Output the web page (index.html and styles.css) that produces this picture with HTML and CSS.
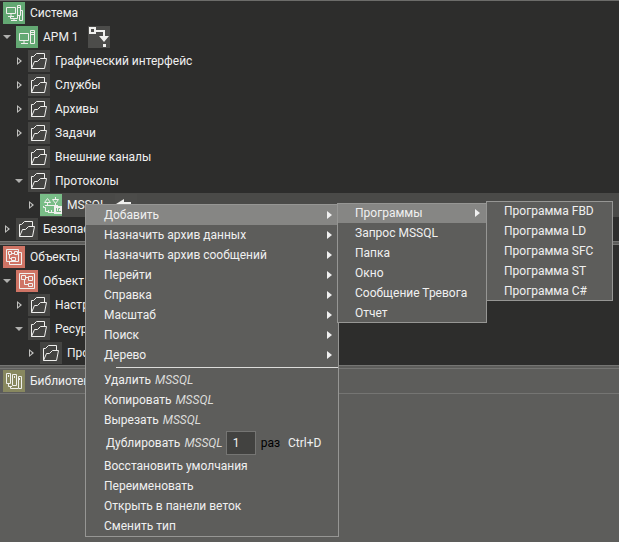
FILE: index.html
```html
<!DOCTYPE html>
<html lang="ru">
<head>
  <meta charset="UTF-8" />
  <meta name="viewport" content="width=device-width, initial-scale=1.0"/>
  <title>Система</title>
  <link rel="stylesheet" href="styles.css">
</head>
<body>
  <svg class="defs" aria-hidden="true">
    <symbol id="folder" viewBox="0 0 22 22">
      <path d="M3.500 18.500V6.500H5.500L8.500 3.500H16.500V8.500M3.500 18.500L6.500 11.500H9.500L12.500 8.500H18.500L16.500 18.500Z"/>
    </symbol>
    <symbol id="system" viewBox="0 0 22 22">
      <path d="M3.500 5.500H12.500V11.500H3.500ZM8 12V14M5 14.500H11M14.500 3.500H17.500V13.500H14.500ZM15 5.500H17M7.500 15V16.500H14.500V13M11 17V18M8 18.500H14M16.500 14V18.500H19.500V8.500H18"/>
    </symbol>
    <symbol id="station" viewBox="0 0 22 22">
      <path d="M3.500 7.500H12.500V14.500H3.500ZM8 15V17M5 17.500H12M14.500 4.500H18.500V17.500H14.500ZM15 6.500H18M15 8.500H18"/>
    </symbol>
    <symbol id="objects" viewBox="0 0 22 22">
      <path d="M3.500 3.500H15.500V15.500H3.500ZM5.500 5.500H8.500V8.500H5.500ZM11.500 5.500H14.500V8.500H11.500ZM9 7.500H11M8.500 11.500H12.500V14.500H8.500ZM6.500 9V12.500H8M16 6.500H18.500V18.500H6.500V16"/>
    </symbol>
    <symbol id="object" viewBox="0 0 22 22">
      <path d="M3.500 3.500H18.500V18.500H3.500ZM5.500 5.500H9.500V9.500H5.500ZM12.500 6.500H16.500V10.500H12.500ZM10 7.500H12M12.500 13.500H16.500V16.500H12.500ZM8.500 10V14.500H12"/>
    </symbol>
    <symbol id="library" viewBox="0 0 22 22">
      <path d="M3.500 3.500H7.500V13.500H3.500ZM5.500 5V7M9.500 4.500H13.500V15.500H9.500ZM11.500 6V8M15.500 6.500H18.500V18.500H15.500ZM16.500 8V10M5.500 14V16.500H9M7.500 17V18.500H15"/>
    </symbol>
    <symbol id="mssql" viewBox="0 0 22 22">
      <path d="M4.500 8.500L7.500 4.500L10.500 8.500ZM12.500 5.500H18.500L15.500 9.500ZM15.500 3V5M7.500 9V11M15.500 9V11M5 11.500H18M3.500 12V13.500H5.500V17.500H8.500M8.500 16V19M11.500 16V19M9 18.500H14"/>
      <path class="solid" d="M14 12H22V20H14Z"/>
      <path class="cut" d="M16.500 14V17.500H18.500M20 14.500H18.500V18M19 17.500H21"/>
    </symbol>
  </svg>

  <main class="panels">
    <section class="panel">
      <div class="row root">
        <svg class="icon green"><use href="#system"/></svg>
        <span>Система</span>
      </div>
      <div class="row">
        <button class="toggle open" aria-label="Свернуть"></button>
        <svg class="icon green"><use href="#station"/></svg>
        <span>АРМ 1</span>
        <svg class="icon link" viewBox="0 0 22 22">
          <path d="M2 2H7V7H2Z" class="frame"/>
          <path class="thick" d="M8 5H16V10"/>
          <path class="solid" d="M11 10H21L16 16ZM15 18H18V21H15Z"/>
        </svg>
      </div>
      <div class="row level-2">
        <button class="toggle" aria-label="Развернуть"></button>
        <svg class="icon"><use href="#folder"/></svg>
        <span>Графический интерфейс</span>
      </div>
      <div class="row level-2">
        <button class="toggle" aria-label="Развернуть"></button>
        <svg class="icon"><use href="#folder"/></svg>
        <span>Службы</span>
      </div>
      <div class="row level-2">
        <button class="toggle" aria-label="Развернуть"></button>
        <svg class="icon"><use href="#folder"/></svg>
        <span>Архивы</span>
      </div>
      <div class="row level-2">
        <button class="toggle" aria-label="Развернуть"></button>
        <svg class="icon"><use href="#folder"/></svg>
        <span>Задачи</span>
      </div>
      <div class="row level-2">
        <span class="toggle-space"></span>
        <svg class="icon"><use href="#folder"/></svg>
        <span>Внешние каналы</span>
      </div>
      <div class="row level-2">
        <button class="toggle open" aria-label="Свернуть"></button>
        <svg class="icon"><use href="#folder"/></svg>
        <span>Протоколы</span>
      </div>
      <div class="row level-3 selected">
        <button class="toggle" aria-label="Развернуть"></button>
        <svg class="icon mssql"><use href="#mssql"/></svg>
        <span>MSSQL</span>
        <svg class="icon link" viewBox="0 0 22 22">
          <path class="solid" d="M1 10L9 5V8H16V12H9V15Z"/>
        </svg>
      </div>
      <div class="row">
        <button class="toggle" aria-label="Развернуть"></button>
        <svg class="icon"><use href="#folder"/></svg>
        <span>Безопасность</span>
      </div>
    </section>

    <div class="splitter"></div>

    <section class="panel">
      <div class="row root">
        <svg class="icon red"><use href="#objects"/></svg>
        <span>Объекты</span>
      </div>
      <div class="row">
        <button class="toggle open" aria-label="Свернуть"></button>
        <svg class="icon red"><use href="#object"/></svg>
        <span>Объект</span>
      </div>
      <div class="row level-2">
        <button class="toggle" aria-label="Развернуть"></button>
        <svg class="icon"><use href="#folder"/></svg>
        <span>Настройки</span>
      </div>
      <div class="row level-2">
        <button class="toggle open" aria-label="Свернуть"></button>
        <svg class="icon"><use href="#folder"/></svg>
        <span>Ресурсы</span>
      </div>
      <div class="row level-3">
        <button class="toggle" aria-label="Развернуть"></button>
        <svg class="icon"><use href="#folder"/></svg>
        <span>Программы</span>
      </div>
    </section>

    <div class="splitter"></div>

    <section class="panel library">
      <div class="row root">
        <svg class="icon olive"><use href="#library"/></svg>
        <span>Библиотеки</span>
      </div>
    </section>
  </main>

  <div class="menu context">
    <button class="item more active">Добавить</button>
    <button class="item more">Назначить архив данных</button>
    <button class="item more">Назначить архив сообщений</button>
    <button class="item more">Перейти</button>
    <button class="item more">Справка</button>
    <button class="item more">Масштаб</button>
    <button class="item more">Поиск</button>
    <button class="item more">Дерево</button>
    <hr>
    <button class="item">Удалить <i>MSSQL</i></button>
    <button class="item">Копировать <i>MSSQL</i></button>
    <button class="item">Вырезать <i>MSSQL</i></button>
    <div class="duplicate">
      <label for="count">Дублировать <i>MSSQL</i></label>
      <input type="text" id="count" value="1">
      <span class="times">раз</span>
      <kbd>Ctrl+D</kbd>
    </div>
    <button class="item">Восстановить умолчания</button>
    <button class="item">Переименовать</button>
    <button class="item">Открыть в панели веток</button>
    <button class="item">Сменить тип</button>
  </div>

  <div class="menu add">
    <button class="item more active">Программы</button>
    <button class="item">Запрос MSSQL</button>
    <button class="item">Папка</button>
    <button class="item">Окно</button>
    <button class="item">Сообщение Тревога</button>
    <button class="item">Отчет</button>
  </div>

  <div class="menu programs">
    <button class="item">Программа FBD</button>
    <button class="item">Программа LD</button>
    <button class="item">Программа SFC</button>
    <button class="item">Программа ST</button>
    <button class="item">Программа C#</button>
  </div>
</body>
</html>
```
FILE: styles.css
```css
* {
  box-sizing: border-box;
}

body {
  margin: 0;
  font-family: Roboto, "Noto Sans", sans-serif;
  font-size: 12px;
  color: #f0f0f0;
  background: #2d2d2c;
  overflow: hidden;
}

.defs {
  display: none;
}

.panels {
  display: flex;
  flex-direction: column;
  min-height: 100vh;
  border-top: 1px solid #6c6c6a;
}

.splitter {
  height: 4px;
  background: #5d5d5b;
  border-top: 1px solid #757573;
  border-bottom: 1px solid #757573;
}

.library {
  flex: 1;
  background: #5d5d5b;
}

.library .row {
  border-bottom: 1px solid #757573;
  height: 25px;
}

/* tree */
.row {
  display: flex;
  align-items: center;
  height: 24px;
  white-space: nowrap;
}

.root {
  padding-left: 3px;
}

.level-2 {
  padding-left: 12px;
}

.level-3 {
  padding-left: 24px;
}

.selected {
  background: linear-gradient(to right, #2d2d2c 40px, #4a4a48 40px);
}

.toggle,
.toggle-space {
  width: 16px;
  height: 16px;
  flex: none;
}

.toggle {
  display: flex;
  align-items: center;
  padding: 0 0 0 5px;
  border: 0;
  background: none;
}

.toggle::before {
  content: "";
  width: 5px;
  height: 8px;
  background: #c0c0be;
  clip-path: polygon(0 0, 100% 50%, 0 100%, 0 0, 1px 2px, 1px 6px, 3px 4px, 1px 2px);
}

.toggle.open {
  padding-left: 3px;
}

.toggle.open::before {
  width: 8px;
  height: 4px;
  background: #b0b0ae;
  clip-path: polygon(0 0, 100% 0, 50% 100%);
}

.icon {
  width: 22px;
  height: 22px;
  flex: none;
  margin-right: 5px;
  background: #444442;
  fill: none;
  stroke: #f0f0ee;
}

.icon.green {
  background: #63a873;
}

.icon.mssql {
  background: #79bd87;
}

.icon.red {
  background: #cf7465;
}

.icon.olive {
  background: #88885f;
}

.icon.link {
  margin-left: 9px;
  background: #4c4c4a;
}

.thick,
.frame {
  stroke-width: 2;
}

.solid {
  fill: #f0f0ee;
  stroke: none;
}

.cut {
  stroke: #79bd87;
}

/* menus */
.menu {
  position: absolute;
  background: #5d5d5b;
  outline: 1px solid #969694;
  outline-offset: -1px;
}

.context {
  left: 85px;
  top: 204px;
  width: 254px;
  padding: 1px 0;
}

.add {
  left: 337px;
  top: 203px;
  width: 150px;
}

.programs {
  left: 486px;
  top: 201px;
  width: 127px;
}

.item {
  display: flex;
  align-items: center;
  gap: 4px;
  width: 100%;
  height: 20px;
  padding: 0 7px 0 19px;
  border: 0;
  background: none;
  color: #f0f0f0;
  font: inherit;
  white-space: nowrap;
}

.add .item,
.programs .item {
  padding-left: 18px;
}

.item.active {
  background: #868684;
}

.more::after {
  content: "";
  width: 5px;
  height: 8px;
  margin-left: auto;
  background: #f0f0f0;
  clip-path: polygon(0 0, 100% 50%, 0 100%);
}

.menu i {
  color: #dcdcda;
}

.menu hr {
  height: 1px;
  margin: 2px 0 2px 31px;
  border: 0;
  background: #dcdcda;
}

.duplicate {
  display: flex;
  align-items: center;
  height: 26px;
  padding-left: 21px;
}

.duplicate label {
  display: flex;
  gap: 4px;
}

.duplicate input {
  width: 30px;
  height: 24px;
  margin: 0 5px 0 3px;
  padding: 0 6px;
  border: 1px solid #757573;
  background: #424240;
  color: #f0f0f0;
  font: inherit;
}

.times {
  color: #000;
}

.duplicate kbd {
  margin-left: 8px;
  font-family: inherit;
  font-size: 12px;
}
```
